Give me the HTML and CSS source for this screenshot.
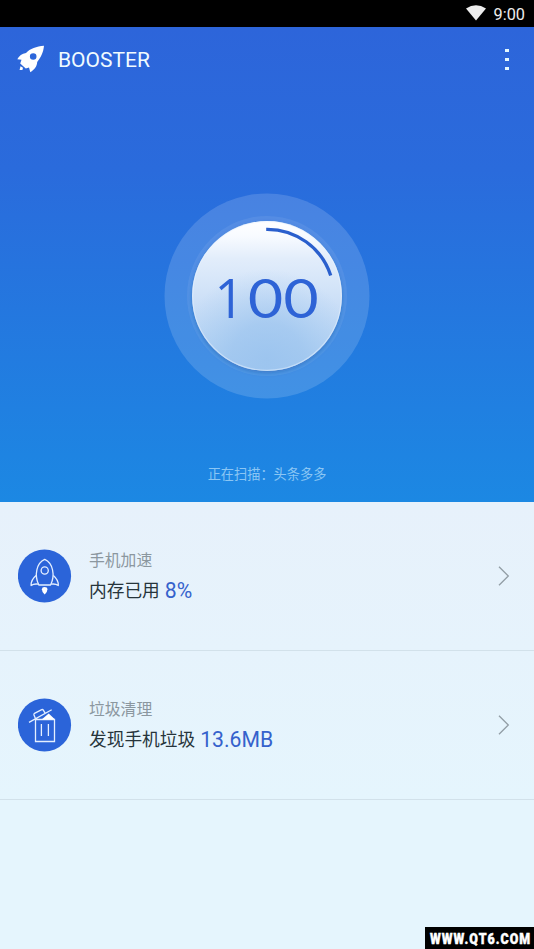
FILE: index.html
```html
<!DOCTYPE html>
<html lang="zh-CN">
<head>
<meta charset="utf-8">
<title>Booster</title>
<link rel="stylesheet" href="styles.css">
</head>
<body>
<div class="status">
  <svg class="wifi" width="20" height="16" viewBox="0 0 20 16"><path d="M0 3.5Q10-3.2 20 3.5L10 15.6Z" fill="#ececec"/></svg>
  <span class="clock">9:00</span>
</div>
<main class="hero">
  <header class="bar">
    <svg class="logo" width="28" height="28" viewBox="0 0 28 28">
      <path fill="#fff" fill-rule="evenodd" d="M27 .8C19.500 1.500 13 3.500 9 8C5 8.500 2 11 .3 14.300L4.500 14.800L3.200 18.600L8.800 23.600L12 22.600L13.300 27.200C17.500 24.500 20 21.500 20.200 17C23.800 12.500 26.300 8 27 .8ZM16.200 8.200a3.300 3.300 0 1 1 0 6.600a3.300 3.300 0 0 1 0-6.600Z"/>
      <path fill="#fff" d="M3.500 21.200L6 22.800L5.400 25L2.600 25Z"/>
    </svg>
    <h1 class="title">BOOSTER</h1>
    <div class="menu"><i></i><i></i><i></i></div>
  </header>
  <svg class="dial" width="206" height="206" viewBox="-103 -103 206 206">
    <defs>
      <linearGradient id="face" x1="0" y1="0" x2="0" y2="1">
        <stop offset="0" stop-color="#fff"/><stop offset=".1" stop-color="#f8fbff"/><stop offset=".25" stop-color="#e2edfb"/><stop offset=".55" stop-color="#cbdff7"/><stop offset="1" stop-color="#a9cdf2"/>
      </linearGradient>
      <radialGradient id="pool" cx=".5" cy=".92" r=".6">
        <stop offset="0" stop-color="#98c2ee" stop-opacity=".8"/><stop offset=".4" stop-color="#9ac3ee" stop-opacity=".65"/><stop offset="1" stop-color="#a5caf0" stop-opacity="0"/>
      </radialGradient>
      <filter id="soft" x="-20%" y="-20%" width="140%" height="140%"><feGaussianBlur stdDeviation="2"/></filter>
    </defs>
    <circle r="102.500" fill="#fff" fill-opacity=".15"/>
    <circle r="80" fill="#fff" fill-opacity=".07"/>
    <circle r="75" cy="2" fill="#174f9e" fill-opacity=".4" filter="url(#soft)"/>
    <circle r="75" fill="url(#face)"/>
    <circle r="75" fill="url(#pool)"/>
    <circle r="74.300" fill="none" stroke="#eaf4ff" stroke-opacity=".5" stroke-width="1.200"/>
    <path d="M-.8-66.700A66.700 66.700 0 0 1 63.700-20.500" fill="none" stroke="#2a5fcd" stroke-width="3.300"/>
    <g class="score"><text class="one" transform="translate(-37.500 22) scale(.950 1)">1</text><text transform="translate(-1.500 22) scale(1.100 1)">0</text><text transform="translate(34 22) scale(1.100 1)">0</text></g>
  </svg>
  <p class="scan">正在扫描：头条多多</p>
</main>
<section class="list">
  <article class="row">
    <svg class="icon" width="54" height="54" viewBox="0 0 54 54">
      <circle cx="27" cy="27" r="26.600" fill="#2b64d9"/>
      <g fill="none" stroke="#e4efff" stroke-width="1.300" stroke-linejoin="round">
        <path d="M21.300 36C16.500 26 19 14 27.200 10.400C35.400 14 37.900 26 33.100 36Z"/><circle cx="27.200" cy="21.500" r="3.600"/>
        <path d="M18.600 26.500C15 29.500 13.400 32.500 13.600 36.500Q16.500 34.500 20.800 35.200M35.800 26.500C39.400 29.500 41 32.500 40.800 36.500Q37.900 34.500 33.600 35.200"/>
      </g>
      <path d="M24.400 40.200Q24.400 38 27 38Q29.900 38 29.900 40.200Q29.900 43.500 27.200 45.500Q24.400 43.500 24.400 40.200Z" fill="#fff"/>
    </svg>
    <div class="copy"><p class="label">手机加速</p><p class="detail">内存已用 <b>8%</b></p></div>
    <svg class="chevron" width="12" height="20" viewBox="0 0 12 20"><path d="M1 .8L10.300 10L1 19.200"/></svg>
  </article>
  <article class="row">
    <svg class="icon" width="54" height="54" viewBox="0 0 54 54">
      <circle cx="27" cy="27" r="26.600" fill="#2b64d9"/>
      <g fill="none" stroke="#e4efff" stroke-width="1.300">
        <path d="M18 21.500H37V43.500H18ZM23.900 26V38M30.900 26V38M11.500 24.400L34.200 11.800M17.900 20.500L16.400 16.800Q16.200 15.800 17 15.300L24.200 11.600Q25.300 11.200 25.800 12.100L27.600 15.200"/>
      </g>
      <path d="M25 20.800L31.200 15.600L36.800 20.800V21.500H24Z" fill="#fff"/>
    </svg>
    <div class="copy"><p class="label">垃圾清理</p><p class="detail">发现手机垃圾 <b>13.6MB</b></p></div>
    <svg class="chevron" width="12" height="20" viewBox="0 0 12 20"><path d="M1 .8L10.300 10L1 19.200"/></svg>
  </article>
</section>
<div class="watermark"><svg width="109" height="22" viewBox="0 0 109 22"><g transform="translate(5 17) scale(.8 1)"><text>WWW.QT6.COM</text></g></svg></div>
</body>
</html>
```
FILE: styles.css
```css
* { box-sizing: border-box; margin: 0; padding: 0; }
body {
  width: 534px; height: 949px; overflow: hidden;
  display: flex; flex-direction: column;
  font-family: Roboto, "Noto Sans CJK SC", sans-serif;
  background: #e5f5fd;
}
.status {
  flex: none; height: 27px; background: #000; color: #ececec;
  display: flex; justify-content: flex-end; padding: 5px 9px 0 0; gap: 8px;
}
.clock { font-size: 16.300px; line-height: 19px; }
.hero {
  flex: none; height: 474.500px;
  display: flex; flex-direction: column; align-items: center;
  background: linear-gradient(#2d65da, #2a6bdc 30%, #1c88e3);
}
.bar { width: 100%; height: 64px; display: flex; align-items: center; padding: 0 25px 0 17px; }
.title { font-size: 21px; font-weight: 400; line-height: 28px; color: #f0fbff; margin: 1px 0 0 13px; }
.menu { margin-left: auto; display: flex; flex-direction: column; gap: 6px; }
.menu i { width: 4px; height: 3px; background: #e4f8ff; }
.dial { flex: none; margin-top: 101.500px; }
.score { font-family: Lato, sans-serif; font-weight: 400; font-size: 55px; fill: #2e63d6; text-anchor: middle; }
.one { font-family: "Open Sans", sans-serif; font-size: 55px; }
.scan { font-size: 13.200px; line-height: 20px; color: #8bc6f4; margin-top: 66px; }
.list { background: linear-gradient(#e7f1fb, #e5f5fd); height: 299px; }
.row { height: 149px; display: flex; align-items: center; padding: 0 24px 0 17.500px; border-bottom: 1px solid #d2e1ea; }
.icon { margin: 0; }
.icon > * { transform: translateX(-.5px); }
.copy { margin: 3px 0 0 17.500px; }
.label { font-size: 15.800px; line-height: 24px; color: #8b979f; }
.detail { font-size: 17.700px; line-height: 30px; color: #26343b; margin-top: 3px; display: flex; align-items: center; gap: 5px; }
.detail b { font-weight: 400; font-size: 21.200px; color: #3562cc; }
.chevron { margin-left: auto; fill: none; stroke: #929da5; stroke-width: 1.300; }
.watermark { position: absolute; right: 0; bottom: 0; width: 109px; height: 22px; background: #000; }
.watermark svg { display: block; }
.watermark text { font: 900 15.500px Roboto, sans-serif; letter-spacing: 1.300px; fill: #fff; stroke: #fff; stroke-width: .5px; }
```
